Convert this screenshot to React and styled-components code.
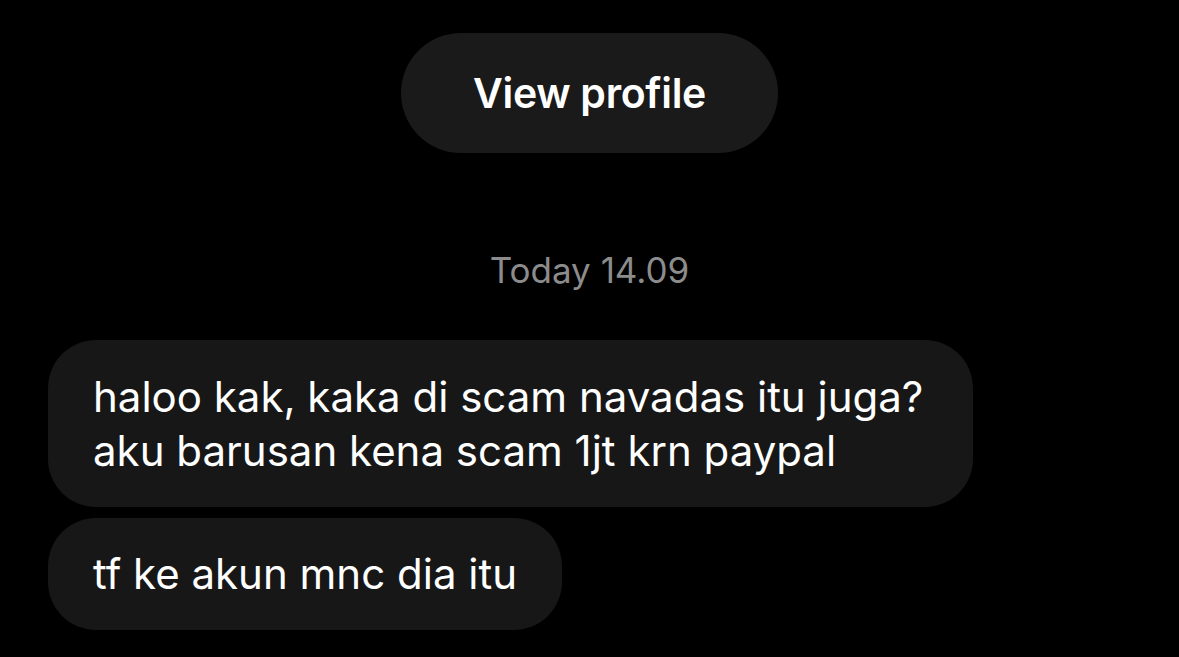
import React from "react";
import styled, { createGlobalStyle } from "styled-components";

const GlobalStyle = createGlobalStyle`
  html, body {
    margin: 0;
    padding: 0;
    background: #000;
  }
  body {
    font-family: Inter, "Liberation Sans", sans-serif;
    -webkit-font-smoothing: antialiased;
  }
`;

const Page = styled.div`
  width: 1179px;
  height: 657px;
  background: #000;
  display: flex;
  flex-direction: column;
  overflow: hidden;
`;

const ProfileButton = styled.button`
  align-self: center;
  margin-top: 33px;
  width: 377px;
  height: 120px;
  border: none;
  border-radius: 60px;
  background: #1a1a1a;
  color: #fff;
  font-family: Inter, "Liberation Sans", sans-serif;
  font-size: 41px;
  font-weight: 600;
  letter-spacing: -0.3px;
  cursor: pointer;
`;

const Timestamp = styled.div`
  align-self: center;
  margin-top: 97px;
  height: 40px;
  line-height: 40px;
  font-size: 35px;
  color: #8c8c8c;
`;

const Thread = styled.div`
  display: flex;
  flex-direction: column;
  align-items: flex-start;
  gap: 11px;
  margin-top: 50px;
  padding-left: 48px;
`;

const Bubble = styled.div`
  background: #171717;
  color: #fff;
  border-radius: 48px;
  padding: ${(p) => (p.$wide ? "30px 50px 29px 45px" : "29px 45px")};
  font-size: 42px;
  line-height: 54px;
  white-space: pre-line;
`;

export default function App() {
  return (
    <Page>
      <GlobalStyle />
      <ProfileButton>View profile</ProfileButton>
      <Timestamp>Today 14.09</Timestamp>
      <Thread>
        <Bubble $wide>
          {"haloo kak, kaka di scam navadas itu juga?\naku barusan kena scam 1jt krn paypal"}
        </Bubble>
        <Bubble>tf ke akun mnc dia itu</Bubble>
      </Thread>
    </Page>
  );
}
